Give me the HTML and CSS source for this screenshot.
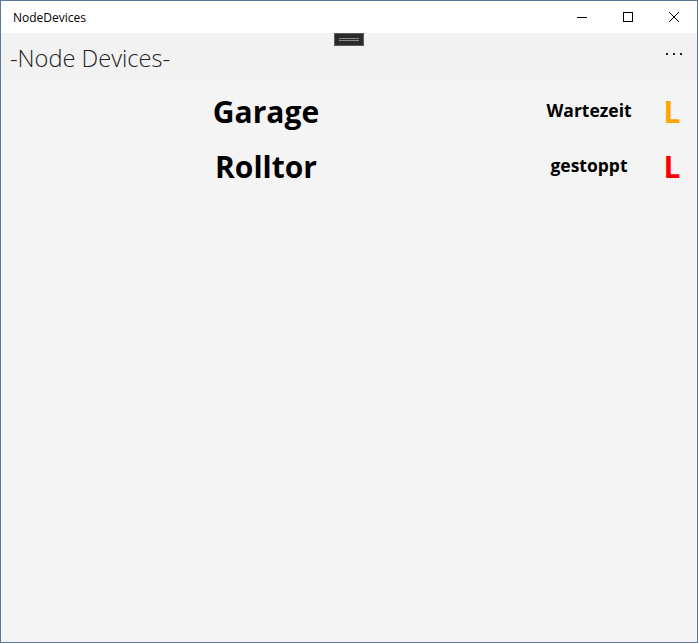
FILE: index.html
```html
<!DOCTYPE html>
<html>
<head>
    <title>NodeDevices</title>
    <link rel="stylesheet" href="styles.css">
</head>
<body>
    <div class="window">
        <div class="titlebar">
            <div class="title">NodeDevices</div>
            <div class="controls">
                <span class="ctl"><svg width="12" height="12" viewBox="0 0 12 12"><path d="M1 6.5h10" stroke="#000" stroke-width="1"/></svg></span>
                <span class="ctl"><svg width="12" height="12" viewBox="0 0 12 12"><rect x="1.5" y="1.5" width="9" height="9" fill="none" stroke="#000" stroke-width="1"/></svg></span>
                <span class="ctl"><svg width="12" height="12" viewBox="0 0 12 12"><path d="M1 1l10 10M11 1L1 11" stroke="#000" stroke-width="1"/></svg></span>
            </div>
        </div>
        <div class="appbar">
            <div class="handle"><span></span><span></span></div>
            <div class="apptitle">-Node Devices-</div>
            <div class="more"><i></i><i></i><i></i></div>
        </div>
        <div class="content">
            <div class="device">
                <div class="name">Garage</div>
                <div class="state">Wartezeit</div>
                <div class="led waiting">L</div>
            </div>
            <div class="device">
                <div class="name">Rolltor</div>
                <div class="state">gestoppt</div>
                <div class="led stopped">L</div>
            </div>
        </div>
    </div>
</body>
</html>
```

FILE: styles.css
```css
* {
    box-sizing: border-box;
}
body {
    margin: 0;
    background-color: #f5f5f5;
}
.window {
    width: 698px;
    height: 643px;
    border: 1px solid #5b7a98;
    display: flex;
    flex-direction: column;
    background-color: #f4f4f4;
    font-family: "Open Sans", "Noto Sans", sans-serif;
}
.titlebar {
    height: 32px;
    background-color: #fff;
    display: flex;
    align-items: center;
    justify-content: space-between;
}
.title {
    font-size: 12px;
    padding-left: 12px;
    color: #000;
}
.controls {
    display: flex;
    height: 100%;
}
.ctl {
    width: 46px;
    display: flex;
    align-items: center;
    justify-content: center;
}
.appbar {
    position: relative;
    height: 48px;
    background-color: #f2f2f2;
    display: flex;
    align-items: center;
    justify-content: space-between;
    padding: 0 15px 0 9px;
}
.handle {
    position: absolute;
    top: 0;
    left: 333px;
    width: 30px;
    height: 13px;
    background-color: #2b2b2b;
    border: 1px solid #5a5a5a;
    display: flex;
    flex-direction: column;
    align-items: center;
    justify-content: center;
    gap: 1px;
}
.handle span {
    display: block;
    width: 20px;
    height: 1px;
    background-color: #8a8a8a;
}
.apptitle {
    font-size: 23.6px;
    font-weight: 300;
    color: #222;
    margin-top: 2px;
}
.more {
    display: flex;
    gap: 5px;
    margin-top: -6px;
}
.more i {
    display: block;
    width: 2px;
    height: 2px;
    background-color: #222;
}
.content {
    flex: 1;
    padding-top: 3px;
}
.device {
    display: grid;
    grid-template-columns: 530px 116px 50px;
    align-items: center;
    height: 55px;
    font-weight: 700;
    color: #000;
}
.name {
    text-align: center;
    font-size: 30px;
}
.state {
    text-align: center;
    font-size: 17.5px;
    margin-top: -4px;
}
.led {
    text-align: center;
    font-size: 30px;
}
.waiting {
    color: #ffa500;
}
.stopped {
    color: #ff0000;
}
```
